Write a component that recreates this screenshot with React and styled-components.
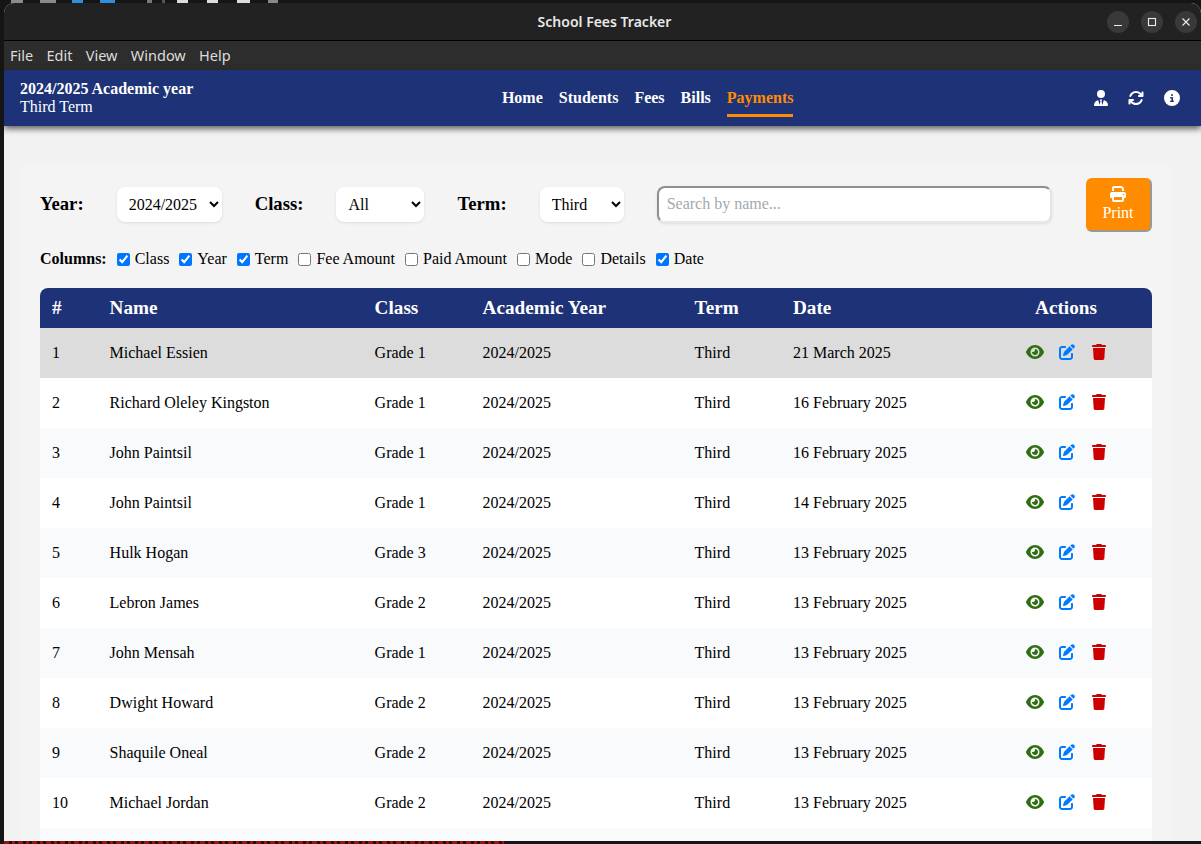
import React from 'react';
import styled, { createGlobalStyle } from 'styled-components';
import { FaUserTie, FaArrowsRotate, FaCircleInfo, FaPrint, FaEye, FaPenToSquare, FaTrash } from 'react-icons/fa6';

const payments = [
  ['Michael Essien', 'Grade 1', '21 March 2025'],
  ['Richard Oleley Kingston', 'Grade 1', '16 February 2025'],
  ['John Paintsil', 'Grade 1', '16 February 2025'],
  ['John Paintsil', 'Grade 1', '14 February 2025'],
  ['Hulk Hogan', 'Grade 3', '13 February 2025'],
  ['Lebron James', 'Grade 2', '13 February 2025'],
  ['John Mensah', 'Grade 1', '13 February 2025'],
  ['Dwight Howard', 'Grade 2', '13 February 2025'],
  ['Shaquile Oneal', 'Grade 2', '13 February 2025'],
  ['Michael Jordan', 'Grade 2', '13 February 2025'],
];

const columnsOptions = [
  ['Class', true],
  ['Year', true],
  ['Term', true],
  ['Fee Amount', false],
  ['Paid Amount', false],
  ['Mode', false],
  ['Details', false],
  ['Date', true],
];

const desktopMarks = [
  [11, 12, '#8a8a8a'],
  [17, 16, '#8a8a8a'],
  [16, 11, '#2f8fdc'],
  [17, 15, '#2f8fdc'],
  [32, 5, '#777'],
  [10, 3, '#555'],
  [12, 11, '#ddd'],
  [19, 11, '#ddd'],
  [19, 13, '#ddd'],
  [18, 10, '#888'],
];

const App = () => {
  return (
    <Desktop>
      <GlobalStyle />
      <TopStrip>
        {desktopMarks.map(([gap, width, color], i) => (
          <DesktopMark key={i} $gap={gap} $width={width} $color={color} />
        ))}
      </TopStrip>
      <Window>
        <TitleBar>
          <WindowTitle>School Fees Tracker</WindowTitle>
          <WindowButtons>
            <WindowButton>
              <svg width="10" height="10" viewBox="0 0 10 10">
                <path d="M1 8.5h8" stroke="#eee" strokeWidth="1.2" />
              </svg>
            </WindowButton>
            <WindowButton>
              <svg width="10" height="10" viewBox="0 0 10 10">
                <rect x="1.5" y="1.5" width="7" height="7" fill="none" stroke="#eee" strokeWidth="1.1" />
              </svg>
            </WindowButton>
            <WindowButton>
              <svg width="10" height="10" viewBox="0 0 10 10">
                <path d="M1.5 1.5l7 7M8.5 1.5l-7 7" stroke="#eee" strokeWidth="1.1" />
              </svg>
            </WindowButton>
          </WindowButtons>
        </TitleBar>
        <MenuBar>
          <MenuItem>File</MenuItem>
          <MenuItem>Edit</MenuItem>
          <MenuItem>View</MenuItem>
          <MenuItem>Window</MenuItem>
          <MenuItem>Help</MenuItem>
        </MenuBar>
        <Header>
          <TermInfo>
            <strong>2024/2025 Academic year</strong>
            <span>Third Term</span>
          </TermInfo>
          <Nav>
            <NavLink>Home</NavLink>
            <NavLink>Students</NavLink>
            <NavLink>Fees</NavLink>
            <NavLink>Bills</NavLink>
            <NavLink $active>Payments</NavLink>
          </Nav>
          <HeaderIcons>
            <FaUserTie size={16} />
            <FaArrowsRotate size={16} />
            <FaCircleInfo size={16} />
          </HeaderIcons>
        </Header>
        <Page>
          <Card>
            <Filters>
              <FilterLabel>Year:</FilterLabel>
              <FilterSelect $width={105} defaultValue="2024/2025">
                <option>2024/2025</option>
              </FilterSelect>
              <FilterLabel>Class:</FilterLabel>
              <FilterSelect $width={88} defaultValue="All">
                <option>All</option>
              </FilterSelect>
              <FilterLabel>Term:</FilterLabel>
              <FilterSelect $width={84} defaultValue="Third">
                <option>Third</option>
              </FilterSelect>
              <SearchInput placeholder="Search by name..." />
              <PrintButton>
                <FaPrint size={16} />
                Print
              </PrintButton>
            </Filters>
            <ColumnsRow>
              <ColumnsTitle>Columns:</ColumnsTitle>
              {columnsOptions.map(([name, checked]) => (
                <ColumnOption key={name}>
                  <input type="checkbox" defaultChecked={checked} />
                  {name}
                </ColumnOption>
              ))}
            </ColumnsRow>
            <Table>
              <colgroup>
                <col width="57.6" />
                <col width="265" />
                <col width="108" />
                <col width="212" />
                <col width="98.4" />
                <col width="200" />
                <col width="171" />
              </colgroup>
              <thead>
                <tr>
                  <Th>#</Th>
                  <Th>Name</Th>
                  <Th>Class</Th>
                  <Th>Academic Year</Th>
                  <Th>Term</Th>
                  <Th>Date</Th>
                  <Th $center>Actions</Th>
                </tr>
              </thead>
              <tbody>
                {payments.map(([name, grade, date], i) => (
                  <Row key={i} $selected={i === 0}>
                    <Td>{i + 1}</Td>
                    <Td>{name}</Td>
                    <Td>{grade}</Td>
                    <Td>2024/2025</Td>
                    <Td>Third</Td>
                    <Td>{date}</Td>
                    <Td>
                      <Actions>
                        <ActionIcon $color="#2f6f12"><FaEye size={18} /></ActionIcon>
                        <ActionIcon $color="#007bff"><FaPenToSquare size={16} /></ActionIcon>
                        <ActionIcon $color="#cc0000"><FaTrash size={16} /></ActionIcon>
                      </Actions>
                    </Td>
                  </Row>
                ))}
                <Row>
                  <Td colSpan={7} />
                </Row>
              </tbody>
            </Table>
          </Card>
        </Page>
      </Window>
      <BottomStrip />
    </Desktop>
  );
};

export default App;

const GlobalStyle = createGlobalStyle`
  html, body {
    margin: 0;
    padding: 0;
    background: #151515;
    overflow: hidden;
  }
  * {
    box-sizing: border-box;
  }
`;

const Desktop = styled.div`
  width: 1201px;
  height: 844px;
  display: flex;
  flex-direction: column;
  padding-left: 4px;
  background: #151515;
  overflow: hidden;
  font-family: 'Liberation Serif', 'Times New Roman', serif;
  font-size: 16px;
  color: #000;
`;

const TopStrip = styled.div`
  height: 3px;
  flex: none;
  display: flex;
  margin-left: -4px;
`;

const DesktopMark = styled.span`
  width: ${(p) => p.$width}px;
  margin-left: ${(p) => p.$gap}px;
  background: ${(p) => p.$color};
`;

const BottomStrip = styled.div`
  height: 3px;
  flex: none;
  margin-left: 0;
  width: 500px;
  background: repeating-linear-gradient(90deg, #a01010 0 5px, #2a0808 5px 8px, #a01010 8px 11px, #151515 11px 14px);
`;

const Window = styled.div`
  flex: 1;
  min-height: 0;
  display: flex;
  flex-direction: column;
  overflow: hidden;
  border-radius: 10px 10px 0 0;
  background: #f2f2f2;
`;

const TitleBar = styled.div`
  height: 38px;
  flex: none;
  display: flex;
  align-items: center;
  justify-content: center;
  position: relative;
  padding-left: 4px;
  background: #222222;
  border-bottom: 1px solid #000;
`;

const WindowTitle = styled.div`
  font-family: 'Noto Sans', 'Open Sans', sans-serif;
  font-size: 14px;
  font-weight: 600;
  color: #e8e8e8;
`;

const WindowButtons = styled.div`
  position: absolute;
  right: 4px;
  top: 8px;
  display: flex;
  gap: 12px;
`;

const WindowButton = styled.div`
  width: 22px;
  height: 22px;
  border-radius: 50%;
  background: #393939;
  display: flex;
  align-items: center;
  justify-content: center;
`;

const MenuBar = styled.div`
  height: 29px;
  flex: none;
  display: flex;
  align-items: center;
  gap: 13.3px;
  padding: 0 0 2px 6px;
  background: #2d2d2d;
`;

const MenuItem = styled.span`
  font-family: 'Noto Sans', 'Open Sans', sans-serif;
  font-size: 14.5px;
  color: #dcdcdc;
`;

const Header = styled.header`
  height: 56px;
  flex: none;
  display: flex;
  align-items: center;
  justify-content: space-between;
  padding: 0 21px 0 16px;
  background: #1e3278;
  color: #fff;
  position: relative;
  box-shadow: 0 3px 6px rgba(0, 0, 0, 0.6);
`;

const TermInfo = styled.div`
  width: 182.4px;
  display: flex;
  flex-direction: column;
  line-height: 18px;
  white-space: nowrap;
  padding-bottom: 1px;
`;

const Nav = styled.nav`
  display: flex;
  align-self: stretch;
  gap: 16px;
`;

const NavLink = styled.a`
  display: flex;
  align-items: center;
  font-weight: bold;
  height: 47px;
  padding-top: 12px;
  color: ${(p) => (p.$active ? '#ff8c00' : '#fff')};
  border-bottom: 3px solid ${(p) => (p.$active ? '#ff8c00' : 'transparent')};
`;

const HeaderIcons = styled.div`
  display: flex;
  align-items: center;
  gap: 20px;
  padding-bottom: 1px;
  svg:nth-child(2) {
    margin: 0 0.5px 0 -1.5px;
  }
`;

const Page = styled.main`
  flex: 1;
  min-height: 0;
  padding: 36px 29px 0 16px;
  overflow: hidden;
`;

const Card = styled.section`
  padding: 16px 20px 20px;
  background: #f4f4f4;
  border-radius: 10px;
`;

const Filters = styled.div`
  display: flex;
  align-items: center;
  gap: 33px;
  height: 54px;
  padding-bottom: 2px;
`;

const FilterLabel = styled.label`
  font-size: 18.72px;
  font-weight: bold;
  white-space: nowrap;
`;

const FilterSelect = styled.select`
  width: ${(p) => p.$width}px;
  height: 35px;
  padding: 0 0 0 8px;
  border: none;
  border-radius: 8px;
  background: #fff;
  font-family: inherit;
  font-size: 16px;
  color: #000;
  box-shadow: 0 1px 3px rgba(0, 0, 0, 0.1);
`;

const SearchInput = styled.input`
  width: 395px;
  height: 37px;
  padding: 0 8px;
  border: 2px solid;
  border-color: #8f8f8f #e4e4e4 #e8e8e8 #8f8f8f;
  border-radius: 8px;
  background: #fff;
  font-family: inherit;
  font-size: 16px;
  box-shadow: 0 1px 3px rgba(0, 0, 0, 0.1);
  &::placeholder {
    color: #a4a8ad;
  }
`;

const PrintButton = styled.button`
  width: 66px;
  height: 54px;
  margin-left: auto;
  margin-bottom: -2px;
  padding: 0 2px 2px 0;
  display: flex;
  flex-direction: column;
  align-items: center;
  justify-content: center;
  gap: 2px;
  border: 2px solid;
  border-color: #ff8c00 #999 #999 #ff8c00;
  border-radius: 6px;
  background: #ff8c00;
  color: #fff;
  font-family: inherit;
  font-size: 16px;
`;

const ColumnsRow = styled.div`
  display: flex;
  align-items: center;
  gap: 10px;
  height: 18px;
  margin: 18px 0 20px;
  white-space: nowrap;
`;

const ColumnsTitle = styled.strong``;

const ColumnOption = styled.label`
  display: flex;
  align-items: center;
  gap: 5px;
  input {
    width: 13px;
    height: 13px;
    margin: 0;
  }
`;

const Table = styled.table`
  width: 1112px;
  table-layout: fixed;
  border-collapse: separate;
  border-spacing: 0;
  background: #fff;
`;

const Th = styled.th`
  height: 40px;
  padding: 0 ${(p) => (p.$center ? '13px' : '12px')} 0 12px;
  background: #1e3278;
  color: #fff;
  font-size: 19.2px;
  font-weight: bold;
  text-align: ${(p) => (p.$center ? 'center' : 'left')};
  &:first-child {
    border-top-left-radius: 8px;
  }
  &:last-child {
    border-top-right-radius: 8px;
  }
`;

const Row = styled.tr`
  background: ${(p) => (p.$selected ? '#dcdcdc' : '#fff')};
  &:nth-child(odd) {
    background: ${(p) => (p.$selected ? '#dcdcdc' : '#f8fafc')};
  }
`;

const Td = styled.td`
  height: 50px;
  padding: 0 12px;
  white-space: nowrap;
`;

const Actions = styled.div`
  display: flex;
  align-items: center;
  justify-content: center;
  gap: 15.5px;
  padding: 0 0 2px 0;
`;

const ActionIcon = styled.span`
  display: flex;
  color: ${(p) => p.$color};
`;
